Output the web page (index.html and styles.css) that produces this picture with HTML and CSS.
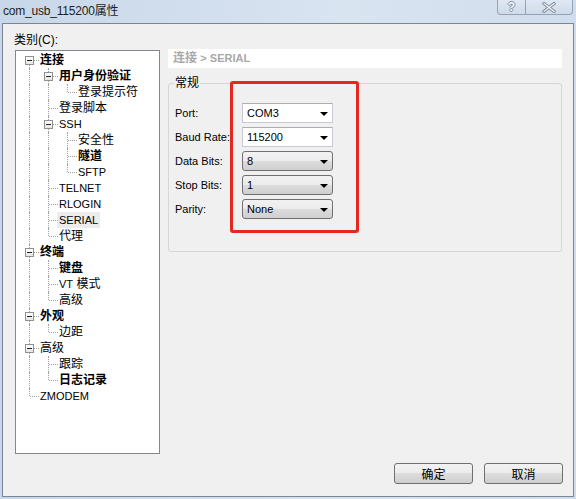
FILE: index.html
```html
<!DOCTYPE html>
<html lang="zh-CN">
<head>
  <meta charset="UTF-8">
  <title>com_usb_115200属性</title>
  <link rel="stylesheet" href="styles.css">
</head>
<body>
  <div class="window">
    <div class="titlebar">
      <span class="title">com_usb_115200属性</span>
      <div class="caption-btns">
        <span class="cap help">?</span>
        <span class="cap close">
          <svg width="14" height="11" viewBox="0 0 14 11">
            <path d="M2 1.5 L12 9.5 M12 1.5 L2 9.5" stroke="#8392a4" stroke-width="3.2" stroke-linecap="square" fill="none"/>
            <path d="M2 1.5 L12 9.5 M12 1.5 L2 9.5" stroke="#f4f7fb" stroke-width="1.2" stroke-linecap="square" fill="none"/>
          </svg>
        </span>
      </div>
    </div>

    <div class="client">
      <div class="main">
        <div class="left">
          <div class="cat-label">类别(C):</div>
          <div class="tree">
            <div class="row"><i class="g f"><b class="box"></b></i><span class="lbl b">连接</span></div>
            <div class="row"><i class="g v"></i><i class="g t"><b class="box"></b></i><span class="lbl b">用户身份验证</span></div>
            <div class="row"><i class="g v"></i><i class="g v"></i><i class="g l"></i><span class="lbl">登录提示符</span></div>
            <div class="row"><i class="g v"></i><i class="g t"></i><span class="lbl">登录脚本</span></div>
            <div class="row"><i class="g v"></i><i class="g t"><b class="box"></b></i><span class="lbl en">SSH</span></div>
            <div class="row"><i class="g v"></i><i class="g v"></i><i class="g t"></i><span class="lbl">安全性</span></div>
            <div class="row"><i class="g v"></i><i class="g v"></i><i class="g t"></i><span class="lbl b">隧道</span></div>
            <div class="row"><i class="g v"></i><i class="g v"></i><i class="g l"></i><span class="lbl en">SFTP</span></div>
            <div class="row"><i class="g v"></i><i class="g t"></i><span class="lbl en">TELNET</span></div>
            <div class="row"><i class="g v"></i><i class="g t"></i><span class="lbl en">RLOGIN</span></div>
            <div class="row"><i class="g v"></i><i class="g t"></i><span class="lbl en selected">SERIAL</span></div>
            <div class="row"><i class="g v"></i><i class="g l"></i><span class="lbl">代理</span></div>
            <div class="row"><i class="g t"><b class="box"></b></i><span class="lbl b">终端</span></div>
            <div class="row"><i class="g v"></i><i class="g t"></i><span class="lbl b">键盘</span></div>
            <div class="row"><i class="g v"></i><i class="g t"></i><span class="lbl"><span class="en">VT</span> 模式</span></div>
            <div class="row"><i class="g v"></i><i class="g l"></i><span class="lbl">高级</span></div>
            <div class="row"><i class="g t"><b class="box"></b></i><span class="lbl b">外观</span></div>
            <div class="row"><i class="g v"></i><i class="g l"></i><span class="lbl">边距</span></div>
            <div class="row"><i class="g t"><b class="box"></b></i><span class="lbl">高级</span></div>
            <div class="row"><i class="g v"></i><i class="g t"></i><span class="lbl">跟踪</span></div>
            <div class="row"><i class="g v"></i><i class="g l"></i><span class="lbl b">日志记录</span></div>
            <div class="row"><i class="g l"></i><span class="lbl en">ZMODEM</span></div>
          </div>
        </div>

        <div class="right">
          <div class="crumb">连接 <span class="en">&gt; SERIAL</span></div>
          <fieldset class="group">
            <legend>常规</legend>
            <div class="field"><label>Port:</label><div class="combo edit"><span>COM3</span><i class="arrow"></i></div></div>
            <div class="field"><label>Baud Rate:</label><div class="combo edit"><span>115200</span><i class="arrow"></i></div></div>
            <div class="field"><label>Data Bits:</label><div class="combo drop"><span>8</span><i class="arrow"></i></div></div>
            <div class="field"><label>Stop Bits:</label><div class="combo drop"><span>1</span><i class="arrow"></i></div></div>
            <div class="field"><label>Parity:</label><div class="combo drop"><span>None</span><i class="arrow"></i></div></div>
          </fieldset>
          <div class="mark"></div>
        </div>
      </div>

      <div class="buttons">
        <button class="btn">确定</button>
        <button class="btn">取消</button>
      </div>
    </div>
  </div>
</body>
</html>
```

FILE: styles.css
```css
body {
  margin: 0;
  font-family: "Liberation Sans", "Noto Sans CJK SC", sans-serif;
  font-size: 12px;
  color: #000;
}
.window {
  width: 576px;
  height: 499px;
  background: linear-gradient(to right, #c8d7e9, #d9e4f1 60%, #d0ddec);
  display: flex;
  flex-direction: column;
}
.titlebar {
  height: 23px;
  display: flex;
  flex: none;
}
.title {
  line-height: 23px;
  padding-left: 3px;
  font-size: 12px;
  letter-spacing: -0.2px;
  color: #1e1e1e;
}
.caption-btns {
  margin-left: auto;
  margin-right: 3px;
  height: 14px;
  display: flex;
  border: 1px solid #94a3b6;
  border-top: none;
  border-radius: 0 0 4px 4px;
  background: linear-gradient(#dfe8f3, #cfdbea);
}
.cap {
  display: flex;
  align-items: center;
  justify-content: center;
}
.help {
  width: 27px;
  border-right: 1px solid #94a3b6;
  font-weight: bold;
  font-size: 12px;
  color: #f4f7fb;
  text-shadow: 1px 0 #8392a4, -1px 0 #8392a4, 0 1px #8392a4, 0 -1px #8392a4;
}
.close {
  width: 46px;
}
.client {
  flex: 1;
  margin: 0 2px 2px;
  border: 1px solid #7b8593;
  background: #f0f0f0;
  padding: 7px 10px 0 11px;
}
.main {
  display: flex;
}
.left {
  width: 146px;
}
.cat-label {
  height: 18px;
  line-height: 18px;
}
.tree {
  margin: 1px 0 0 1px;
  height: 404px;
  box-sizing: border-box;
  border: 1px solid #828790;
  background: #fff;
  padding: 1px 0 0 4px;
}
.row {
  display: flex;
  height: 16px;
  line-height: 16px;
  white-space: nowrap;
}
.g {
  position: relative;
  width: 19px;
  height: 16px;
  flex: none;
}
.g::before, .g::after {
  content: "";
  position: absolute;
}
.g.v::before, .g.t::before {
  left: 9px;
  top: 0;
  bottom: 0;
  border-left: 1px dotted #a0a0a0;
}
.g.l::before {
  left: 9px;
  top: 0;
  height: 8px;
  border-left: 1px dotted #a0a0a0;
}
.g.f::before {
  left: 9px;
  top: 8px;
  bottom: 0;
  border-left: 1px dotted #a0a0a0;
}
.g.t::after, .g.l::after, .g.f::after {
  left: 10px;
  right: 0;
  top: 8px;
  border-top: 1px dotted #a0a0a0;
}
.box {
  position: absolute;
  z-index: 1;
  left: 5px;
  top: 4px;
  width: 9px;
  height: 9px;
  box-sizing: border-box;
  border: 1px solid #919191;
  background: linear-gradient(#fff, #e4e4e4);
}
.box::after {
  content: "";
  position: absolute;
  left: 1px;
  top: 3px;
  width: 5px;
  height: 1px;
  background: #222;
}
.lbl {
  padding: 0 2px;
  margin-left: -1px;
}
.lbl.b {
  font-weight: bold;
}
.en {
  font-size: 11px;
}
.selected {
  background: #ececec;
}
.right {
  position: relative;
  margin-left: 8px;
  width: 394px;
}
.crumb {
  margin-top: 18px;
  height: 19px;
  line-height: 19px;
  background: #fff;
  padding-left: 5px;
  color: #a8a8a8;
  font-weight: bold;
}
.group {
  margin: 7px 0 0;
  padding: 10px 0 30px 6px;
  border: 1px solid #d3d6da;
  border-radius: 3px;
  min-width: 0;
}
.group legend {
  padding: 0 1px;
  margin-left: -1px;
  line-height: 16px;
}
.field {
  display: flex;
  align-items: center;
  height: 24px;
}
.field label {
  width: 67px;
  font-size: 11px;
}
.combo {
  width: 91px;
  height: 20px;
  box-sizing: border-box;
  display: flex;
  align-items: center;
  padding: 0 4px;
  font-size: 11px;
}
.combo span {
  flex: 1;
}
.combo.edit {
  background: #fff;
  border: 1px solid #c7cbd1;
  border-top-color: #abadb3;
}
.combo.drop {
  border: 1px solid #707070;
  border-radius: 3px;
  background: linear-gradient(#f2f2f2, #ebebeb 50%, #dddddd 50%, #cfcfcf);
}
.arrow {
  width: 0;
  height: 0;
  border-left: 4px solid transparent;
  border-right: 4px solid transparent;
  border-top: 4px solid #000;
  margin-top: 1px;
}
.mark {
  position: absolute;
  left: 62px;
  top: 50px;
  width: 129px;
  height: 152px;
  box-sizing: border-box;
  border: 3px solid #e5271f;
  border-radius: 3px;
}
.buttons {
  display: flex;
  justify-content: flex-end;
  gap: 11px;
  margin-top: 9px;
}
.btn {
  width: 79px;
  height: 21px;
  border: 1px solid #707070;
  border-radius: 3px;
  background: linear-gradient(#f2f2f2, #ebebeb 50%, #dddddd 50%, #cfcfcf);
  font-family: "Liberation Sans", "Noto Sans CJK SC", sans-serif;
  font-size: 12px;
  padding: 0;
  color: #000;
}
```
